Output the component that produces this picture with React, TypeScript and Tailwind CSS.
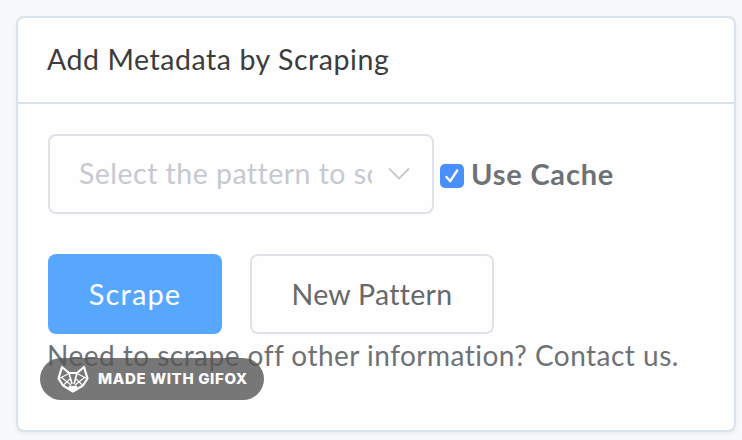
function FoxIcon() {
  return (
    <svg width="32" height="30" viewBox="0 0 32 30" fill="none" stroke="#fff" strokeWidth="1.1" strokeLinejoin="round">
      <path strokeWidth="2.2" d="M5 3 12 9H20L27 3 30.5 14.5 26 21.5 16 27.5 6 21.5 1.5 14.5Z" />
      <path strokeWidth="1.6" d="M12 9 15 20M20 9 17 20" />
      <path d="M2 14.5 12 9.5M30 14.5 20 9.5M4.5 13.5 14 21M27.5 13.5 18 21M6 21.5 13 15M26 21.5 19 15" />
      <path fill="#fff" d="m12.5 22 3.5.5 3.5-.5.5 2-4 3-4-3Z" />
    </svg>
  );
}

export default function App() {
  return (
    <div className="relative h-[440px] w-[742px] overflow-hidden bg-[#f6f8fa] pl-4 pt-4 font-[Lato,sans-serif] text-[28px] leading-8 text-[#6e7276]">
      <section className="h-[416px] w-[720px] rounded-lg border-2 border-[#d9e3ed] bg-[#fefefe] shadow-[0_2px_4px_rgba(0,0,0,0.05)]">
        <header className="flex h-[86px] items-center whitespace-nowrap border-b-2 border-[#d9e3ed] pb-0.5 pl-[29px] text-[#3c3c3c]">
          <h1 className="text-[28.5px] tracking-[0.56px]">Add Metadata by Scraping</h1>
        </header>
        <div className="pl-[30px] pt-[30px]">
          <div className="flex items-center">
            <div className="flex h-20 w-[386px] items-center rounded-lg border-2 border-[#dfe2e8] pl-[29px] text-[#c6c9cf]">
              <span className="w-[293px] overflow-hidden whitespace-nowrap pb-0.5 text-[28.5px] tracking-[0.47px]">Select the pattern to scrape</span>
              <svg className="ml-4" width="22" height="14" viewBox="0 0 22 14" fill="none" stroke="currentColor" strokeWidth="1.8">
                <path d="m1 1.5 10 10 10-10" />
              </svg>
            </div>
            <label className="flex items-center whitespace-nowrap pl-1.5 font-bold">
              <span className="mt-1 flex size-6 items-center justify-center rounded-[5px] bg-[#4a90fa]">
                <svg width="16" height="16" viewBox="0 0 16 16" fill="none" stroke="#fff" strokeWidth="2.4" strokeLinecap="round" strokeLinejoin="round">
                  <path d="m2.5 9 3.7 4.2L13.2 2.5" />
                </svg>
              </span>
              <span className="pb-px pl-[7px] text-[29px] tracking-[0.8px]">Use Cache</span>
            </label>
          </div>
          <div className="flex gap-7 pt-10">
            <button className="h-20 w-[174px] rounded-lg bg-[#57a7ff] text-[29px] tracking-[1.1px] text-white">Scrape</button>
            <button className="h-20 w-[244px] rounded-lg border-2 border-[#dfe2e8] text-[28.5px] tracking-[0.3px] text-[#66686c]">New Pattern</button>
          </div>
          <p className="-ml-px whitespace-nowrap pt-[5px] tracking-[0.48px]">Need to scrape off other information? Contact us.</p>
        </div>
      </section>
      <div className="absolute left-10 top-[358px] flex h-[42px] w-56 items-center rounded-full bg-[#555]/80 pl-[17px] text-white">
        <FoxIcon />
        <span className="whitespace-nowrap pl-[9px] font-[Inter,sans-serif] text-[15px] font-extrabold leading-5 tracking-[0.64px]">MADE WITH GIFOX</span>
      </div>
    </div>
  );
}
